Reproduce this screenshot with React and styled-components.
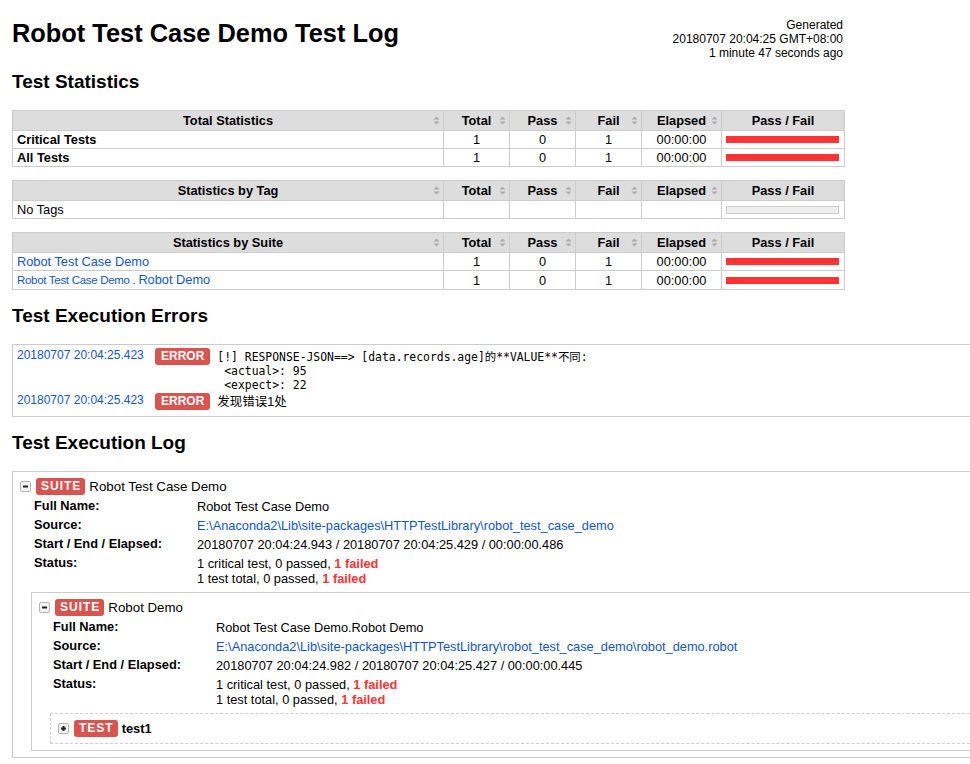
import React from "react";
import styled, { createGlobalStyle } from "styled-components";

const GlobalStyle = createGlobalStyle`
  html, body {
    margin: 0;
    padding: 0;
    overflow: hidden;
    background: #fff;
  }
  body {
    font-family: "Liberation Sans", Arial, "Noto Sans CJK SC", sans-serif;
    font-size: 12.8px;
    color: #000;
  }
`;

const totalRows = [
  { name: "Critical Tests", total: 1, pass: 0, fail: 1, elapsed: "00:00:00" },
  { name: "All Tests", total: 1, pass: 0, fail: 1, elapsed: "00:00:00" },
];

const suiteRows = [
  { name: "Robot Test Case Demo", total: 1, pass: 0, fail: 1, elapsed: "00:00:00" },
  {
    parent: "Robot Test Case Demo . ",
    name: "Robot Demo",
    total: 1,
    pass: 0,
    fail: 1,
    elapsed: "00:00:00",
  },
];

const errors = [
  {
    time: "20180707 20:04:25.423",
    mono: true,
    text: "[!] RESPONSE-JSON==> [data.records.age]的**VALUE**不同:\n <actual>: 95\n <expect>: 22",
  },
  { time: "20180707 20:04:25.423", mono: false, text: "发现错误1处" },
];

const colWidths = [431, 66, 66, 66, 80, 123];

const SortIcon = () => (
  <SortSvg width="7" height="9" viewBox="0 0 7 9">
    <polygon points="3.5,0.5 6.5,3.5 0.5,3.5" fill="#aaa" />
    <polygon points="0.5,5.5 6.5,5.5 3.5,8.5" fill="#aaa" />
  </SortSvg>
);

const Toggle = ({ open }) => (
  <ToggleSvg width="11" height="11" viewBox="0 0 11 11">
    <rect x="0.5" y="0.5" width="10" height="10" rx="1.5" fill="#f3f3f3" stroke="#b4b4b4" />
    <rect x="3" y="4.5" width="5" height="2" fill="#222" />
    {!open && <rect x="4.5" y="3" width="2" height="5" fill="#222" />}
  </ToggleSvg>
);

const StatsTable = ({ title, rows, boldNames, links, emptyText }) => (
  <Table>
    <colgroup>
      {colWidths.map((w, i) => (
        <Col key={i} $w={w} />
      ))}
    </colgroup>
    <thead>
      <tr>
        {[title, "Total", "Pass", "Fail", "Elapsed"].map((h) => (
          <Th key={h}>
            {h}
            <SortIcon />
          </Th>
        ))}
        <Th>Pass / Fail</Th>
      </tr>
    </thead>
    <tbody>
      {rows.length === 0 && (
        <tr>
          <NameCell>{emptyText}</NameCell>
          <Td />
          <Td />
          <Td />
          <Td />
          <Td>
            <Graph $empty />
          </Td>
        </tr>
      )}
      {rows.map((row, index) => (
        <tr key={index}>
          <NameCell $bold={boldNames}>
            {links ? (
              <Link href="#">
                {row.parent && <ParentName>{row.parent}</ParentName>}
                {row.name}
              </Link>
            ) : (
              row.name
            )}
          </NameCell>
          <Td>{row.total}</Td>
          <Td>{row.pass}</Td>
          <Td>{row.fail}</Td>
          <Td>{row.elapsed}</Td>
          <Td>
            <Graph />
          </Td>
        </tr>
      ))}
    </tbody>
  </Table>
);

const Element = ({ kind, name, open, meta, children }) => (
  <ElementBox $dashed={kind === "test"}>
    <ElementHeader>
      <Toggle open={open} />
      <Label $spaced>{kind.toUpperCase()}</Label>
      <ElementName $test={kind === "test"}>{name}</ElementName>
    </ElementHeader>
    {meta && (
      <Metadata>
        {meta.map(([label, value]) => (
          <React.Fragment key={label}>
            <MetaLabel>{label}</MetaLabel>
            <MetaValue>{value}</MetaValue>
          </React.Fragment>
        ))}
      </Metadata>
    )}
    {children && <Children>{children}</Children>}
  </ElementBox>
);

const StatusValue = () => (
  <>
    1 critical test, 0 passed, <Fail>1 failed</Fail>
    <br />
    1 test total, 0 passed, <Fail>1 failed</Fail>
  </>
);

const App = () => {
  return (
    <Page>
      <GlobalStyle />
      <Header>
        <Title>Robot Test Case Demo Test Log</Title>
        <Generated>
          Generated
          <br />
          20180707 20:04:25 GMT+08:00
          <br />1 minute 47 seconds ago
        </Generated>
      </Header>

      <SectionTitle $first>Test Statistics</SectionTitle>
      <StatsList>
        <StatsTable title="Total Statistics" rows={totalRows} boldNames />
        <StatsTable title="Statistics by Tag" rows={[]} emptyText="No Tags" />
        <StatsTable title="Statistics by Suite" rows={suiteRows} links />
      </StatsList>

      <SectionTitle>Test Execution Errors</SectionTitle>
      <ErrorBox>
        {errors.map((err, index) => (
          <ErrorRow key={index}>
            <ErrorTime href="#">{err.time}</ErrorTime>
            <Label>ERROR</Label>
            <Message $mono={err.mono}>{err.text}</Message>
          </ErrorRow>
        ))}
      </ErrorBox>

      <SectionTitle>Test Execution Log</SectionTitle>
      <LogWrap>
        <Element
          kind="suite"
          name="Robot Test Case Demo"
          open
          meta={[
            ["Full Name:", "Robot Test Case Demo"],
            [
              "Source:",
              <Link href="#">
                E:\Anaconda2\Lib\site-packages\HTTPTestLibrary\robot_test_case_demo
              </Link>,
            ],
            [
              "Start / End / Elapsed:",
              "20180707 20:04:24.943 / 20180707 20:04:25.429 / 00:00:00.486",
            ],
            ["Status:", <StatusValue />],
          ]}
        >
          <Element
            kind="suite"
            name="Robot Demo"
            open
            meta={[
              ["Full Name:", "Robot Test Case Demo.Robot Demo"],
              [
                "Source:",
                <Link href="#">
                  E:\Anaconda2\Lib\site-packages\HTTPTestLibrary\robot_test_case_demo\robot_demo.robot
                </Link>,
              ],
              [
                "Start / End / Elapsed:",
                "20180707 20:04:24.982 / 20180707 20:04:25.427 / 00:00:00.445",
              ],
              ["Status:", <StatusValue />],
            ]}
          >
            <Element kind="test" name="test1" />
          </Element>
        </Element>
      </LogWrap>
    </Page>
  );
};

export default App;

const Page = styled.div`
  width: 832px;
  padding-left: 12px;
`;

const Header = styled.header`
  display: flex;
  justify-content: space-between;
  align-items: flex-start;
  padding-top: 18px;
`;

const Title = styled.h1`
  margin: 0;
  font-size: 25.4px;
  line-height: 30px;
  font-weight: bold;
`;

const Generated = styled.div`
  text-align: right;
  font-size: 12px;
  line-height: 14px;
  margin-right: 1px;
`;

const SectionTitle = styled.h2`
  margin: ${(p) => (p.$first ? "11px" : "15px")} 0 17px;
  font-size: 19px;
  line-height: 22px;
  font-weight: bold;
`;

const StatsList = styled.div`
  display: flex;
  flex-direction: column;
  gap: 13px;
`;

const Table = styled.table`
  width: 832px;
  table-layout: fixed;
  border-collapse: collapse;
  border: 1px solid #ccc;
`;

const Col = styled.col`
  width: ${(p) => p.$w}px;
`;

const Th = styled.th`
  position: relative;
  background: #ddd;
  border: 1px solid #ccc;
  padding: 2px 4px;
  line-height: 15px;
  font-weight: bold;
  text-align: center;
`;

const SortSvg = styled.svg`
  position: absolute;
  right: 3px;
  top: 50%;
  margin-top: -4.5px;
`;

const Td = styled.td`
  border: 1px solid #ccc;
  padding: 1px 4px;
  line-height: 15px;
  text-align: center;
  vertical-align: middle;
`;

const NameCell = styled(Td)`
  text-align: left;
  font-weight: ${(p) => (p.$bold ? "bold" : "normal")};
`;

const Link = styled.a`
  color: #15c;
  text-decoration: none;
`;

const ParentName = styled.span`
  font-size: 11.5px;
  letter-spacing: -0.3px;
`;

const Graph = styled.div`
  box-sizing: border-box;
  height: ${(p) => (p.$empty ? 8 : 7)}px;
  margin: 0 1px 0 0;
  background: ${(p) => (p.$empty ? "#eee" : "#f33")};
  border: ${(p) => (p.$empty ? "1px solid #ccc" : "none")};
`;

const ErrorBox = styled.div`
  width: 1000px;
  border: 1px solid #ccc;
  padding: 3px 0 6px;
  display: flex;
  flex-direction: column;
  gap: 1px;
`;

const ErrorRow = styled.div`
  display: flex;
  align-items: flex-start;
`;

const ErrorTime = styled.a`
  box-sizing: border-box;
  width: 142px;
  padding-left: 4px;
  font-size: 12px;
  line-height: 14px;
  color: #15c;
  text-decoration: none;
  flex-shrink: 0;
`;

const Label = styled.span`
  display: inline-block;
  flex-shrink: 0;
  padding: 2px ${(p) => (p.$spaced ? "4px 2px 5px" : "6px")};
  font-size: 12px;
  line-height: 13px;
  font-weight: bold;
  letter-spacing: ${(p) => (p.$spaced ? "1px" : "0")};
  color: #fff;
  background: #d9534f;
  border-radius: 3px;
`;

const Message = styled.div`
  margin-left: 7px;
  padding-top: 2px;
  white-space: pre;
  line-height: 14px;
  font-family: ${(p) =>
    p.$mono
      ? '"DejaVu Sans Mono", "Noto Sans CJK SC", monospace'
      : '"Liberation Sans", Arial, "Noto Sans CJK SC", sans-serif'};
  font-size: ${(p) => (p.$mono ? "11.4px" : "12.5px")};
`;

const LogWrap = styled.div`
  width: 1000px;
`;

const ElementBox = styled.div`
  border: 1px ${(p) => (p.$dashed ? "dashed" : "solid")} #ccc;
  padding-bottom: 6px;
`;

const ElementHeader = styled.div`
  display: flex;
  align-items: center;
  height: 17px;
  padding: 6px 0 0 7px;
`;

const ToggleSvg = styled.svg`
  display: block;
  margin-right: 5px;
  flex-shrink: 0;
`;

const ElementName = styled.span`
  margin-left: 4px;
  line-height: 15px;
  font-size: ${(p) => (p.$test ? "12.8px" : "13.3px")};
  font-weight: ${(p) => (p.$test ? "bold" : "normal")};
`;

const Metadata = styled.div`
  display: grid;
  grid-template-columns: 163px 1fr;
  row-gap: 3px;
  margin: 3px 0 0 21px;
`;

const MetaLabel = styled.div`
  font-weight: bold;
  line-height: 15px;
`;

const MetaValue = styled.div`
  padding-top: 1px;
  line-height: 15px;
  white-space: nowrap;
`;

const Fail = styled.span`
  color: #f33;
  font-weight: bold;
`;

const Children = styled.div`
  margin: 6px 0 0 18px;
`;
